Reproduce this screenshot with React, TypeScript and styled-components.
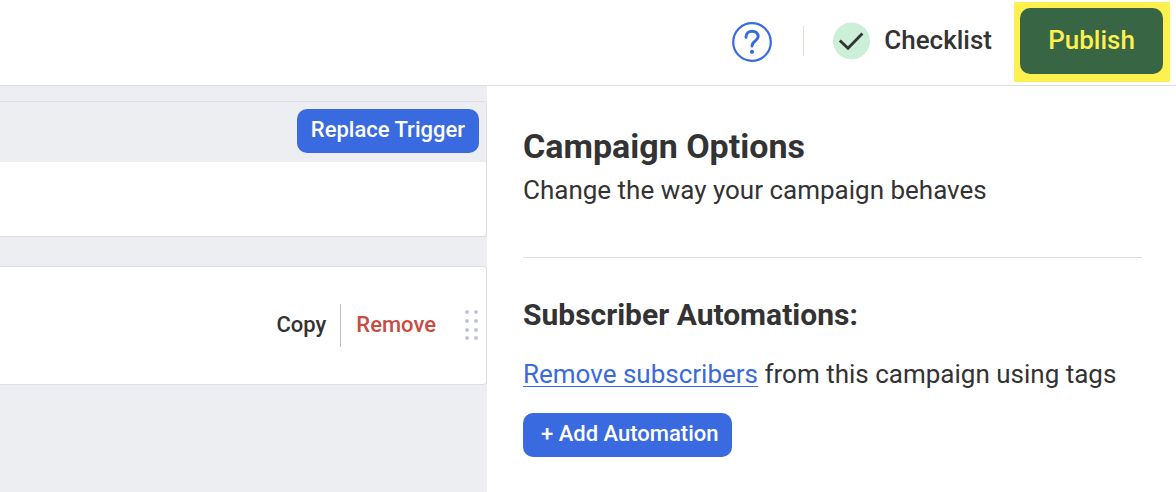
import React from "react";
import styled, { createGlobalStyle } from "styled-components";

const color = {
  text: "#333333",
  blue: "#396ae0",
  red: "#c94b43",
  green: "#386645",
  yellow: "#fdf04f",
  mint: "#ccefd8",
  canvas: "#edeef2",
  line: "#dcdde6",
  grip: "#bcc0d2",
};

const GlobalStyle = createGlobalStyle`
  *, *::before, *::after { box-sizing: border-box; }
  html, body, #root { height: 100%; }
  body {
    margin: 0;
    background: #ffffff;
    color: ${color.text};
    font-family: Roboto, "Liberation Sans", sans-serif;
  }
  button { font-family: inherit; cursor: pointer; }
`;

const Page = styled.div`
  display: flex;
  flex-direction: column;
  min-height: 100%;
`;

const TopBar = styled.header`
  display: flex;
  align-items: center;
  justify-content: flex-end;
  padding: 2px 6px 3px 16px;
  border-bottom: 1px solid ${color.line};
`;

const IconButton = styled.button`
  display: flex;
  padding: 0;
  border: 0;
  background: transparent;
`;

const PlainButton = styled.button`
  display: flex;
  align-items: center;
  padding: 0 0 2px;
  border: 0;
  background: transparent;
  color: ${(p) => p.color ?? color.text};
  font-size: 22px;
  line-height: 26px;
  font-weight: 500;
`;

const ChecklistButton = styled(PlainButton)`
  gap: 14px;
  margin-right: 22px;
  font-size: 26px;
  line-height: 30px;
`;

const ChecklistLabel = styled.span`
  padding-bottom: 2px;
`;

const Divider = styled.span<{ $height: number; $tone: string; $gap: string }>`
  width: 1px;
  height: ${(p) => p.$height}px;
  margin: ${(p) => p.$gap};
  background: ${(p) => p.$tone};
`;

const Highlight = styled.div`
  padding: 6px 7px 8px 6px;
  background: ${color.yellow};
`;

const PublishButton = styled.button`
  display: block;
  width: 143px;
  height: 66px;
  padding: 0 0 2px;
  border: 0;
  border-radius: 10px;
  background: ${color.green};
  color: ${color.yellow};
  font-size: 26px;
  line-height: 30px;
  font-weight: 500;
`;

const Workspace = styled.div`
  display: flex;
  flex: 1;
`;

const Canvas = styled.main`
  display: flex;
  flex: 1;
  flex-direction: column;
  gap: 29px;
  min-width: 0;
  padding-top: 15px;
  background: ${color.canvas};
`;

const Card = styled.section`
  border: 1px solid ${color.line};
  border-left: 0;
  border-radius: 0 4px 4px 0;
  background: #ffffff;
  overflow: hidden;
`;

const CardHeader = styled.div`
  display: flex;
  justify-content: flex-end;
  padding: 7px 7px 9px;
  background: ${color.canvas};
`;

const CardBody = styled.div`
  height: 74px;
`;

const StepRow = styled.div`
  display: flex;
  align-items: center;
  justify-content: flex-end;
  height: 117px;
  padding-right: 7px;
`;

const Grip = styled.svg`
  margin-left: 29px;
`;

const BlueButton = styled.button`
  height: 44px;
  padding: 0 14px 2px;
  border: 0;
  border-radius: 10px;
  background: ${color.blue};
  color: #ffffff;
  font-size: 22px;
  line-height: 26px;
  font-weight: 500;
  white-space: nowrap;
`;

const AddButton = styled(BlueButton)`
  padding-left: 18px;
`;

const OptionsPanel = styled.aside`
  width: 689px;
  padding: 40px 34px 36px 36px;
`;

const Title = styled.h1`
  margin: 0 0 9px;
  font-size: 34px;
  line-height: 40px;
  font-weight: 700;
`;

const Subtitle = styled.h2`
  margin: 0;
  font-size: 30px;
  line-height: 40px;
  font-weight: 700;
`;

const Text = styled.p`
  margin: 0;
  font-size: 26px;
  line-height: 30px;
`;

const Rule = styled.hr`
  height: 1px;
  margin: 52px 0 37px;
  border: 0;
  background: #dcdcdc;
`;

const TextLink = styled.a`
  color: ${color.blue};
  text-decoration-thickness: 1px;
  text-underline-offset: 3px;
  text-decoration-skip-ink: none;
`;

const Automations = styled.div`
  display: flex;
  flex-direction: column;
  align-items: flex-start;
  gap: 24px;
`;

const HelpIcon = () => (
  <svg width="40" height="40" viewBox="0 0 40 40" fill="none" aria-hidden="true">
    <circle cx="20" cy="20" r="18.8" stroke={color.blue} strokeWidth="2.2" />
    <path
      d="M14 15.2C14 11.4 16.6 9.3 20.1 9.3C23.7 9.3 26.2 11.4 26.2 14.6C26.2 18.8 20 19 20 24"
      stroke={color.blue}
      strokeWidth="3"
      strokeLinecap="round"
    />
    <circle cx="20" cy="29.8" r="2.1" fill={color.blue} />
  </svg>
);

const CheckIcon = () => (
  <svg width="38" height="38" viewBox="0 0 38 38" fill="none" aria-hidden="true">
    <circle cx="19.5" cy="19" r="18.5" fill={color.mint} />
    <path d="M7.8 18.4L16 26.2L30.4 11.6" stroke={color.text} strokeWidth="2.8" />
  </svg>
);

const GripIcon = () => (
  <Grip width="14" height="31" viewBox="0 0 14 31" fill={color.grip} role="img" aria-label="Drag">
    {[0, 9, 18, 26].map((y) => (
      <React.Fragment key={y}>
        <rect x="0.3" y={y + 0.3} width="3.4" height="3.4" rx="1" />
        <rect x="9.3" y={y + 0.3} width="3.4" height="3.4" rx="1" />
      </React.Fragment>
    ))}
  </Grip>
);

export default function App() {
  return (
    <Page>
      <GlobalStyle />
      <TopBar>
        <IconButton type="button" aria-label="Help">
          <HelpIcon />
        </IconButton>
        <Divider $height={30} $tone={color.line} $gap="0 28px 2px 31px" />
        <ChecklistButton type="button">
          <CheckIcon />
          <ChecklistLabel>Checklist</ChecklistLabel>
        </ChecklistButton>
        <Highlight>
          <PublishButton type="button">Publish</PublishButton>
        </Highlight>
      </TopBar>
      <Workspace>
        <Canvas>
          <Card>
            <CardHeader>
              <BlueButton type="button">Replace Trigger</BlueButton>
            </CardHeader>
            <CardBody />
          </Card>
          <Card>
            <StepRow>
              <PlainButton type="button">Copy</PlainButton>
              <Divider $height={43} $tone={color.grip} $gap="0 15px 0 14px" />
              <PlainButton type="button" color={color.red}>
                Remove
              </PlainButton>
              <GripIcon />
            </StepRow>
          </Card>
        </Canvas>
        <OptionsPanel>
          <Title>Campaign Options</Title>
          <Text>Change the way your campaign behaves</Text>
          <Rule />
          <Automations>
            <Subtitle>Subscriber Automations:</Subtitle>
            <Text>
              <TextLink href="#subscribers">Remove subscribers</TextLink> from this campaign using tags
            </Text>
            <AddButton type="button">+ Add Automation</AddButton>
          </Automations>
        </OptionsPanel>
      </Workspace>
    </Page>
  );
}
